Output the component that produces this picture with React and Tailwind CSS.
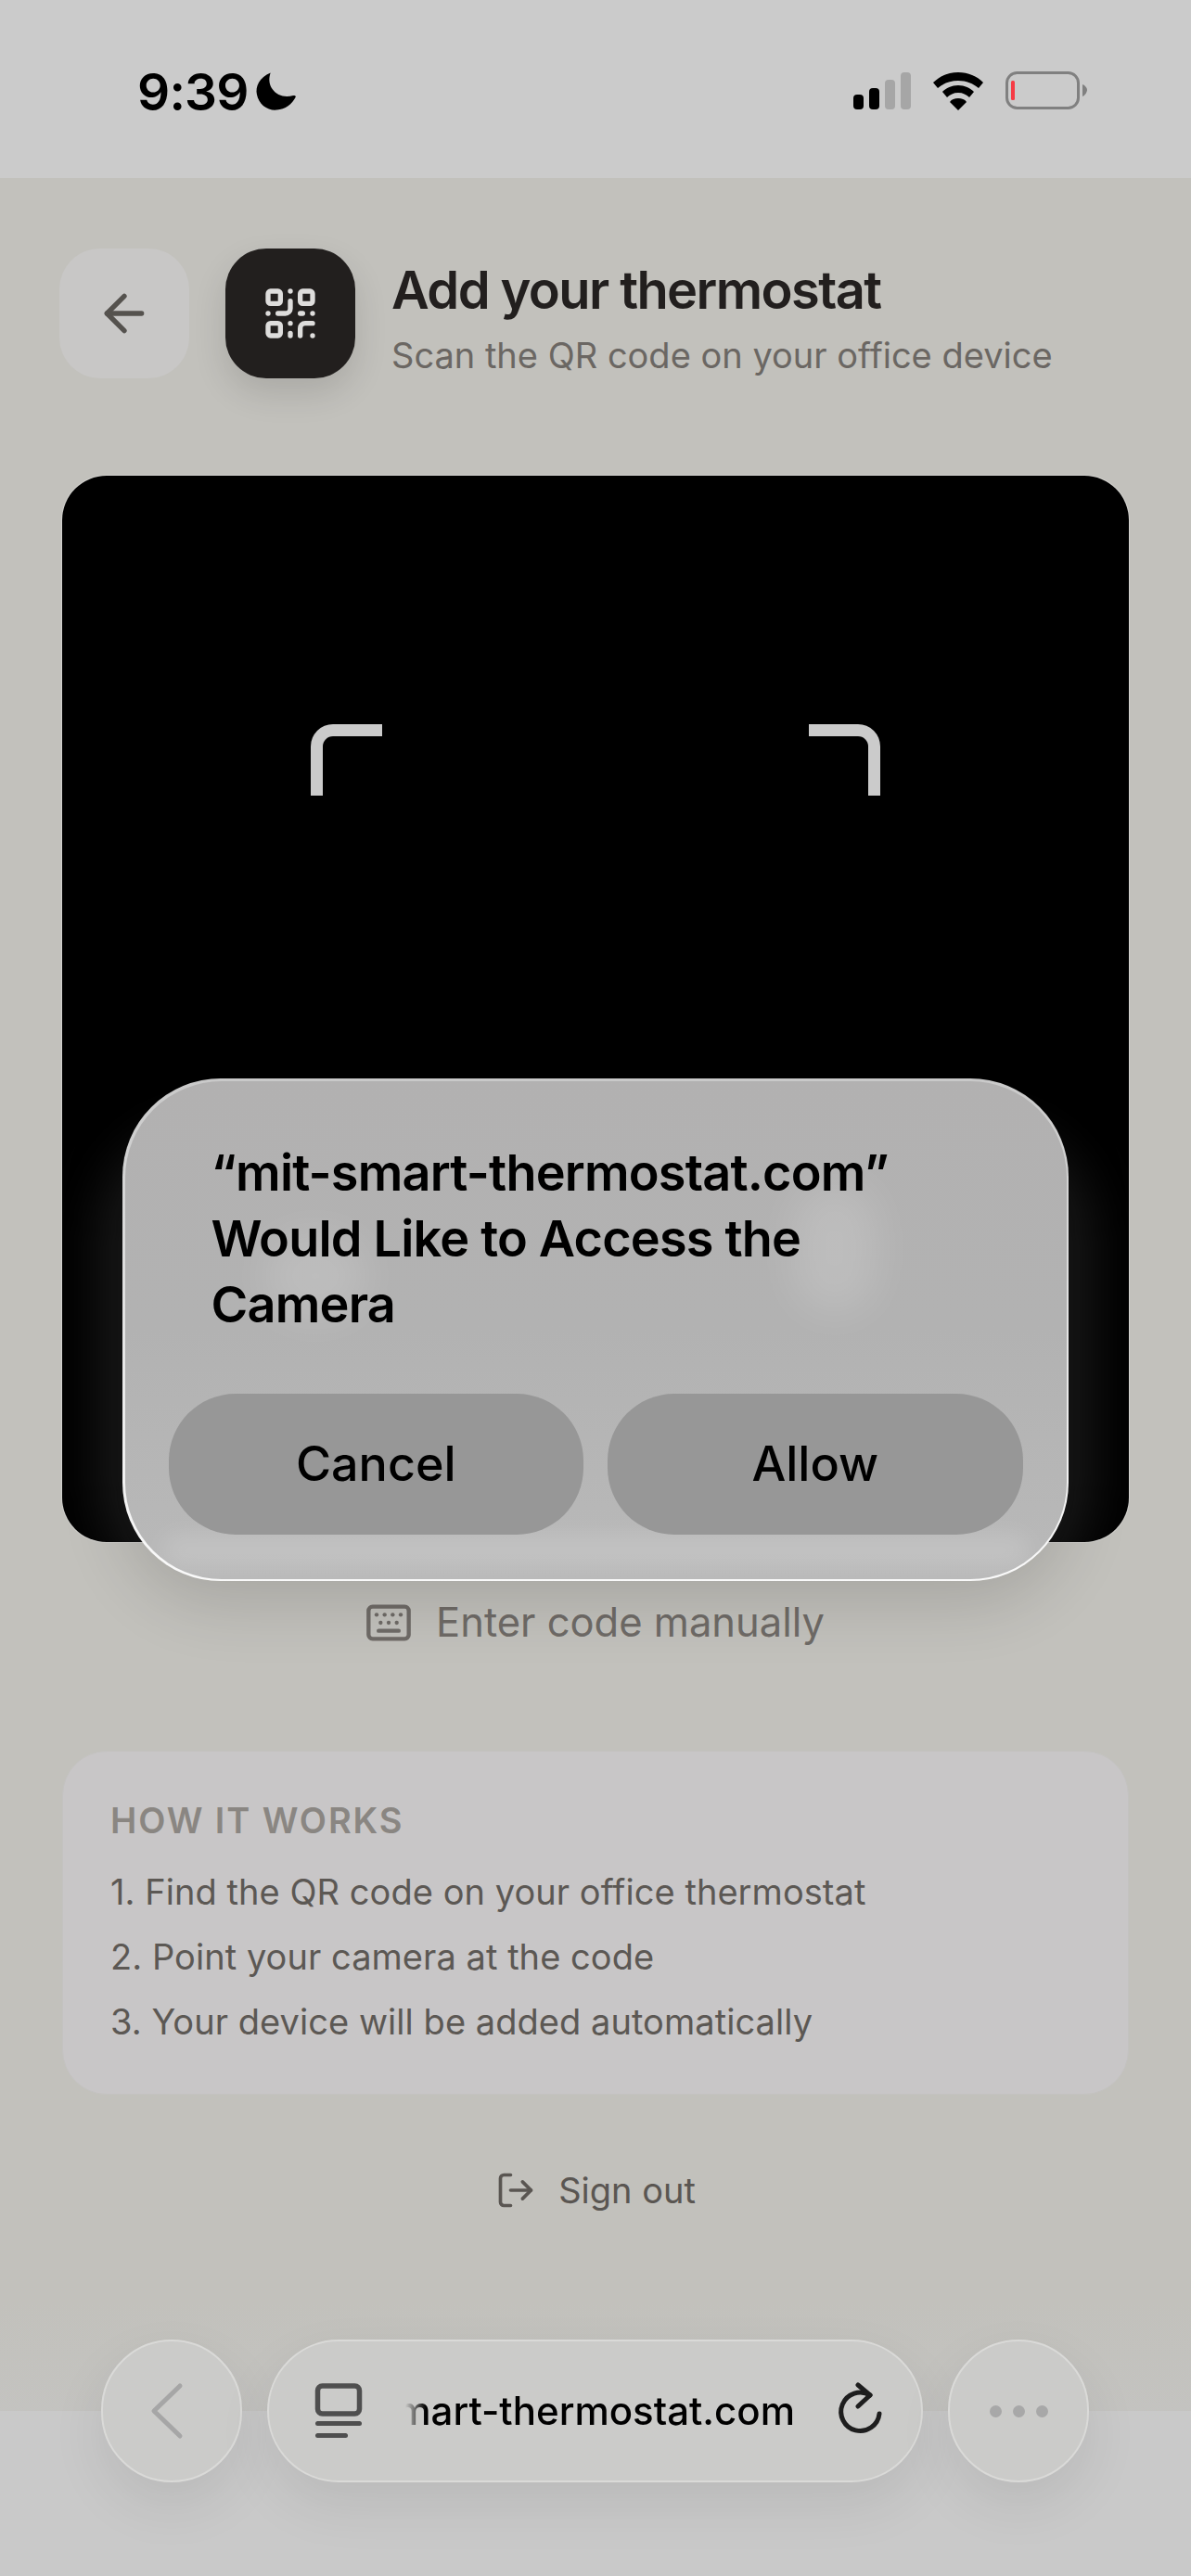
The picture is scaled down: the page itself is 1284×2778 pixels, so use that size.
import { ArrowLeft, Keyboard, LogOut, QrCode } from "lucide-react";

const FONT = "font-['Inter','Liberation_Sans',sans-serif]";

function StatusBar() {
  return (
    <div className="h-[192px] bg-[#cbcbcb] flex items-start justify-between pt-[77px] pl-[148px] pr-[112px]">
      <div className="flex items-center gap-[7px]">
        <span className="text-[55px] leading-[42px] font-semibold tracking-[-0.8px] text-black">9:39</span>
        <svg width="45" height="43" viewBox="0 0 46 43">
          <path d="M17 1C5 6 0 16 2 25c2 11 12 18 22 17 9-1 17-6 21-15-1-1-2-1-3-1-9 3-18 0-23-7-4-6-4-12-2-18z" fill="#000" />
        </svg>
      </div>
      <div className="flex items-center">
        <svg width="63" height="41" viewBox="0 0 63 41" className="mr-[22px]">
          <rect x="0" y="24" width="11" height="16" rx="4" fill="#000" />
          <rect x="17" y="17" width="11" height="23" rx="4" fill="#000" />
          <rect x="34" y="8" width="11" height="32" rx="4" fill="#a6a6a6" />
          <rect x="51" y="0" width="11" height="40" rx="4" fill="#a6a6a6" />
        </svg>
        <svg width="56" height="41" viewBox="0 0 56 41" className="mr-[23px]">
          <path d="M28 0C17 0 8 4 1 11l5 6c6-5 13-8 22-8s16 3 22 8l5-6C48 4 39 0 28 0z" fill="#000" />
          <path d="M28 14c-7 0-13 3-17 7l5 6c3-3 7-5 12-5s9 2 12 5l5-6c-4-4-10-7-17-7z" fill="#000" />
          <path d="M28 28c-4 0-7 1-9 4l9 9 9-9c-2-3-5-4-9-4z" fill="#000" />
        </svg>
        <svg width="88" height="42" viewBox="0 0 88 42">
          <rect x="1.5" y="1.5" width="77" height="38" rx="11" fill="none" stroke="#808080" strokeWidth="3" />
          <rect x="6" y="10" width="4" height="21" rx="1.5" fill="#f63b45" />
          <path d="M83 14c3 1 5 4 5 6s-2 6-5 7z" fill="#808080" />
        </svg>
      </div>
    </div>
  );
}

function Header() {
  return (
    <div className="-ml-[3px] flex items-center">
      <button className="w-[140px] h-[140px] rounded-[44px] bg-[#c8c7c6] flex items-center justify-center text-[#55524e]">
        <ArrowLeft size={64} strokeWidth={2} />
      </button>
      <div className="ml-[39px] w-[140px] h-[140px] rounded-[44px] bg-[#221f1e] flex items-center justify-center text-[#dedddc] shadow-[0_16px_36px_rgba(0,0,0,0.12)]">
        <QrCode size={64} strokeWidth={2} />
      </div>
      <div className="ml-[39px] pt-[10px] flex flex-col">
        <h1 className="text-[56px] leading-[68px] font-semibold tracking-[-1.6px] text-[#221f1e]">Add your thermostat</h1>
        <p className="text-[38px] leading-[50px] mt-[11px] text-[#6b6763]">Scan the QR code on your office device</p>
      </div>
    </div>
  );
}

function Corner({ right }) {
  return (
    <div
      className={
        right
          ? "w-[77px] h-[77px] border-t-[13px] border-r-[13px] border-[#cbcbcb] rounded-tr-[24px]"
          : "w-[77px] h-[77px] border-t-[13px] border-l-[13px] border-[#cbcbcb] rounded-tl-[24px]"
      }
    />
  );
}

function CameraCard() {
  return (
    <div className="relative mt-[105px] h-[1150px] rounded-[48px] bg-black overflow-hidden flex justify-between px-[268px] pt-[268px] shadow-[0_0_0_1px_rgba(255,255,255,0.25)]">
      <Corner />
      <Corner right />
      {/* glow of the dialog on the black feed */}
      <div className="absolute left-[40px] right-[40px] top-[700px] bottom-[-60px] rounded-[120px] bg-white/10 blur-[30px]" />
    </div>
  );
}

function HowItWorks() {
  return (
    <div className="mt-[108px] h-[371px] rounded-[48px] bg-[#c8c6c7] border border-[#c3c2c0] px-[51px] pt-[52px]">
      <h2 className="text-[38px] leading-[44px] font-semibold tracking-[1.9px] text-[#8a8682]">HOW IT WORKS</h2>
      <ol className="mt-[20px] text-[38px] leading-[70px] tracking-[0.05px] text-[#5c5854]">
        <li>1. Find the QR code on your office thermostat</li>
        <li>2. Point your camera at the code</li>
        <li>3. Your device will be added automatically</li>
      </ol>
    </div>
  );
}

function PermissionDialog() {
  return (
    <div className="absolute left-[132px] top-[1163px] w-[1020px] h-[542px] rounded-[106px] p-[2.5px] bg-gradient-to-b from-[#c9c9c9] via-[#e4e4e4] to-[#fafafa] shadow-[0_24px_70px_rgba(0,0,0,0.14)]">
      <div className="relative h-full rounded-[104px] overflow-hidden bg-gradient-to-b from-[#b2b1b1] via-[#b2b2b2] to-[#b9b9b9]">
        {/* blurred corners of the scan frame showing through */}
        <div className="absolute left-[150px] top-[165px] w-[110px] h-[90px] rounded-full bg-white/15 blur-[22px]" />
        <div className="absolute left-[720px] top-[110px] w-[90px] h-[140px] rounded-full bg-white/15 blur-[22px]" />
        <div className="absolute left-[40px] right-[40px] bottom-[14px] h-[34px] rounded-full bg-white/15 blur-[12px]" />
        <div className="relative pl-[93px] pt-[63px]">
          <h2 className="text-[54px] leading-[71px] font-semibold tracking-[-0.8px] text-black">
            “mit-smart-thermostat.com”
            <br />
            Would Like to Access the
            <br />
            Camera
          </h2>
        </div>
        <div className="relative mt-[61px] flex gap-[26px] px-[47px]">
          <button className="flex-1 h-[152px] rounded-[72px] bg-[#979797] text-[52px] font-medium text-black">Cancel</button>
          <button className="flex-1 h-[152px] rounded-[72px] bg-[#979797] text-[52px] font-medium text-black">Allow</button>
        </div>
      </div>
    </div>
  );
}

function BrowserBar() {
  return (
    <div className="absolute left-0 right-0 bottom-0 h-[298px] bg-gradient-to-b from-[#c2c1bc]/0 to-[#c6c6c6]">
      <div className="absolute left-0 right-0 bottom-0 h-[178px] bg-[#c9c9c9]" />
      <div className="relative mt-[43px] flex gap-[27px] pl-[109px]">
        <div className="w-[152px] h-[154px] rounded-full bg-[#cbcbc9] border-[2px] border-[#dadad8] shadow-[0_24px_60px_rgba(0,0,0,0.08)] flex items-center justify-center">
          <svg width="40" height="62" viewBox="0 0 40 62" className="mr-[10px]">
            <path d="M34 4 6 31l28 27" fill="none" stroke="#a6a6a6" strokeWidth="5" strokeLinecap="round" strokeLinejoin="round" />
          </svg>
        </div>
        <div className="w-[707px] h-[154px] rounded-[77px] bg-[#cbcbc9] border-[2px] border-[#dadad8] shadow-[0_24px_60px_rgba(0,0,0,0.08)] flex items-center pl-[49px] pr-[41px]">
          <svg width="52" height="60" viewBox="0 0 52 60" className="shrink-0">
            <rect x="3.5" y="3" width="45" height="30" rx="5" fill="none" stroke="#4f4f4f" strokeWidth="5.5" />
            <rect x="1" y="41" width="50" height="5" rx="2.5" fill="#4f4f4f" />
            <rect x="1" y="54" width="35" height="5" rx="2.5" fill="#4f4f4f" />
          </svg>
          <div className="ml-[46px] w-[420px] overflow-hidden flex justify-end [mask-image:linear-gradient(to_right,transparent,black_22px)]">
            <span className="shrink-0 whitespace-nowrap text-[42px] leading-[60px] font-medium text-black">mit-smart-thermostat.com</span>
          </div>
          <svg width="52" height="62" viewBox="0 0 52 62" className="ml-auto">
            <path d="M38 14a20.7 20.7 0 1 0 10 20" fill="none" stroke="#1e1e1e" strokeWidth="5" strokeLinecap="round" />
            <path d="M25 3l13 11-13 12" fill="none" stroke="#1e1e1e" strokeWidth="5" strokeLinecap="round" strokeLinejoin="round" />
          </svg>
        </div>
        <div className="w-[152px] h-[154px] rounded-full bg-[#cbcbc9] border-[2px] border-[#dadad8] shadow-[0_24px_60px_rgba(0,0,0,0.08)] flex items-center justify-center gap-[12px]">
          <span className="w-[13px] h-[13px] rounded-full bg-[#a8a8a8]" />
          <span className="w-[13px] h-[13px] rounded-full bg-[#a8a8a8]" />
          <span className="w-[13px] h-[13px] rounded-full bg-[#a8a8a8]" />
        </div>
      </div>
    </div>
  );
}

export default function App() {
  return (
    <div className={`${FONT} relative w-[1284px] h-[2778px] overflow-hidden bg-[#c2c1bc]`}>
      <StatusBar />
      <main className="px-[67px] pt-[76px]">
        <Header />
        <CameraCard />
        <button className="mt-[57px] mx-auto h-[60px] -translate-x-[1px] flex items-center gap-[25px] text-[#6f6b67] text-[43.5px]">
          <Keyboard size={52} strokeWidth={2} />
          <span>Enter code manually</span>
        </button>
        <HowItWorks />
        <button className="mt-[73px] mx-auto h-[60px] flex items-center gap-[24px] text-[#5a5652] text-[38px]">
          <LogOut size={44} strokeWidth={2} />
          <span>Sign out</span>
        </button>
      </main>
      <PermissionDialog />
      <BrowserBar />
    </div>
  );
}
